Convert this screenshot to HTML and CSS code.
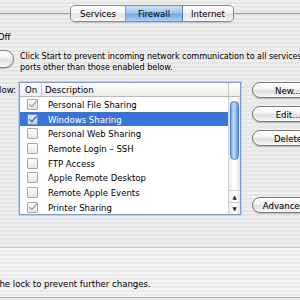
FILE: index.html
```html
<!DOCTYPE html>
<html lang="en">
<head>
  <meta charset="UTF-8">
  <title>Sharing - Firewall</title>
  <link rel="stylesheet" href="styles.css">
</head>
<body>
  <div class="pane">
    <!-- tabs -->
    <div class="tabbar">
      <div class="tab-line left"></div>
      <div class="segmented">
        <div class="seg services">Services</div>
        <div class="seg firewall selected">Firewall</div>
        <div class="seg internet">Internet</div>
      </div>
      <div class="tab-line right"></div>
    </div>

    <div class="status"><span class="status-text">Firewall Off</span></div>

    <div class="start-row">
      <button class="aqua-btn start-btn">Start</button>
      <p class="start-desc">Click Start to prevent incoming network communication to all services and<br>ports other than those enabled below.</p>
    </div>

    <div class="allow-row">
      <div class="allow-label"><span>Allow:</span></div>

      <div class="list">
        <div class="list-head">
          <div class="col-on">On</div>
          <div class="col-desc">Description</div>
          <div class="col-scroll"></div>
        </div>
        <div class="list-body">
          <div class="rows">
            <div class="row"><span class="check on"></span><span class="name">Personal File Sharing</span></div>
            <div class="row selected"><span class="check on"></span><span class="name">Windows Sharing</span></div>
            <div class="row"><span class="check"></span><span class="name">Personal Web Sharing</span></div>
            <div class="row"><span class="check"></span><span class="name">Remote Login – SSH</span></div>
            <div class="row"><span class="check"></span><span class="name">FTP Access</span></div>
            <div class="row"><span class="check"></span><span class="name">Apple Remote Desktop</span></div>
            <div class="row"><span class="check"></span><span class="name">Remote Apple Events</span></div>
            <div class="row"><span class="check on"></span><span class="name">Printer Sharing</span></div>
          </div>
          <div class="scrollbar">
            <div class="thumb"></div>
            <div class="arrows">
              <div class="arrow up">▲</div>
              <div class="arrow down">▼</div>
            </div>
          </div>
        </div>
      </div>

      <div class="side-buttons">
        <button class="aqua-btn">New...</button>
        <button class="aqua-btn">Edit...</button>
        <button class="aqua-btn">Delete</button>
        <button class="aqua-btn advanced">Advanced...</button>
      </div>
    </div>
  </div>

  <div class="footer">
    <span class="lock-text">Click the lock to prevent further changes.</span>
  </div>
</body>
</html>
```

FILE: styles.css
```css
html, body { margin: 0; padding: 0; }
body { width: 300px; height: 300px; overflow: hidden; font-family: 'DejaVu Sans Condensed', 'DejaVu Sans', sans-serif; font-size: 9.5px; color: #000; background: #e9e9e9; }

.pane { height: 247px; border-bottom: 1px solid #c4c4c4; background: repeating-linear-gradient(to bottom, #eeeeee 0, #eeeeee 2px, #e5e5e5 2px, #e5e5e5 4px); overflow: hidden; }

/* tabs */
.tabbar { display: flex; align-items: center; padding-top: 5px; height: 17px; }
.tab-line { height: 1px; background: #9c9c9c; }
.tab-line.left { width: 70px; }
.tab-line.right { flex: 1; }
.segmented { display: flex; height: 15px; border: 1px solid #8a8a8a; border-radius: 5px; overflow: hidden; box-shadow: 0 1px 1px rgba(0,0,0,0.15); }
.seg { display: flex; align-items: center; justify-content: center; background: linear-gradient(to bottom, #ffffff 0%, #f4f4f4 45%, #e4e4e4 55%, #f6f6f6 100%); border-right: 1px solid #9a9a9a; }
.seg:last-child { border-right: none; }
.seg.services { width: 54px; }
.seg.firewall { width: 56px; }
.seg.internet { width: 50px; }
.seg.selected { background: linear-gradient(to bottom, #cfe4fb 0%, #9cc6f2 45%, #6fa9ea 55%, #a9d2f8 100%); border-right-color: #5a7fb0; }

.status { margin-top: 9px; height: 11px; line-height: 11px; white-space: nowrap; }
.status-text { margin-left: -37px; }

.start-row { display: flex; margin-top: 8px; height: 20px; }
.aqua-btn { font-family: inherit; font-size: 9.5px; color: #000; padding: 0; height: 16px; border: 1px solid #7c7c7c; border-radius: 8px; background: linear-gradient(to bottom, #ffffff 0%, #f2f2f2 45%, #e0e0e0 55%, #f8f8f8 100%); box-shadow: 0 1px 1px rgba(0,0,0,0.2); white-space: nowrap; }
.start-btn { width: 70px; height: 18px; border-radius: 9px; margin-left: -56px; flex-shrink: 0; }
.start-desc { margin: 1px 0 0 6px; font-size: 9px; letter-spacing: -0.05px; line-height: 11px; white-space: nowrap; }

.allow-row { display: flex; margin-top: 12px; }
.allow-label { width: 17px; flex-shrink: 0; display: flex; justify-content: flex-end; white-space: nowrap; padding-top: 2px; line-height: 11px; }
.allow-label span { margin-right: 1px; }

/* list */
.list { margin-left: 2px; width: 220px; height: 131px; flex-shrink: 0; background: #fff; border: 1px solid #7f9ccc; box-shadow: 0 0 0 1px #b9d0ee; }
.list-head { display: flex; height: 13px; line-height: 13px; border-bottom: 1px solid #b8b8b8; background: linear-gradient(to bottom, #ffffff, #ececec); }
.col-on { width: 22px; padding-left: 5px; box-sizing: border-box; border-right: 1px solid #c8c8c8; }
.col-desc { flex: 1; padding-left: 3px; border-right: 1px solid #c8c8c8; }
.col-scroll { width: 11px; }
.list-body { display: flex; height: 117px; }
.rows { flex: 1; }
.row { display: flex; align-items: center; height: 14.7px; }
.row.selected { background: #3a74d6; color: #fff; }
.check { width: 9px; height: 9px; margin-left: 7px; margin-right: 10px; border: 1px solid #a8a8a8; border-radius: 1px; background: linear-gradient(to bottom, #fcfcfc, #e6e6e6); position: relative; flex-shrink: 0; }
.check.on::after { content: ""; position: absolute; left: 3px; top: -1px; width: 3px; height: 7px; border: solid #8d8d8d; border-width: 0 1.5px 1.5px 0; transform: rotate(40deg); }
.row.selected .check { background: linear-gradient(to bottom, #dfeaf8, #b7cdec); border-color: #6f8fbe; }
.row.selected .check.on::after { border-color: #2d4f8a; }
.name { white-space: nowrap; }

.scrollbar { width: 11px; border-left: 1px solid #d4d4d4; display: flex; flex-direction: column; background: linear-gradient(to right, #e9e9e9, #ffffff 40%, #ffffff 60%, #e4e4e4); }
.thumb { margin: 4px 1px 0 1px; height: 57px; border-radius: 5px; border: 1px solid #4c7fc3; background: linear-gradient(to right, #6ea6e8 0%, #c9e1fa 40%, #9cc6f3 60%, #5a97e0 100%); }
.arrows { margin-top: auto; }
.arrow { height: 11px; line-height: 11px; font-size: 6px; text-align: center; color: #222; border-top: 1px solid #cfcfcf; }

.side-buttons { margin-left: 11px; display: flex; flex-direction: column; gap: 8px; }
.side-buttons .aqua-btn { width: 72px; }
.side-buttons .advanced { margin-top: 43px; }

.footer { height: 49px; border-bottom: 1px solid #b0b0b0; background: repeating-linear-gradient(to bottom, #f2f2f2 0, #f2f2f2 2px, #ebebeb 2px, #ebebeb 4px); white-space: nowrap; }
.lock-text { display: inline-block; margin-left: -27px; margin-top: 30px; line-height: 11px; }
```
